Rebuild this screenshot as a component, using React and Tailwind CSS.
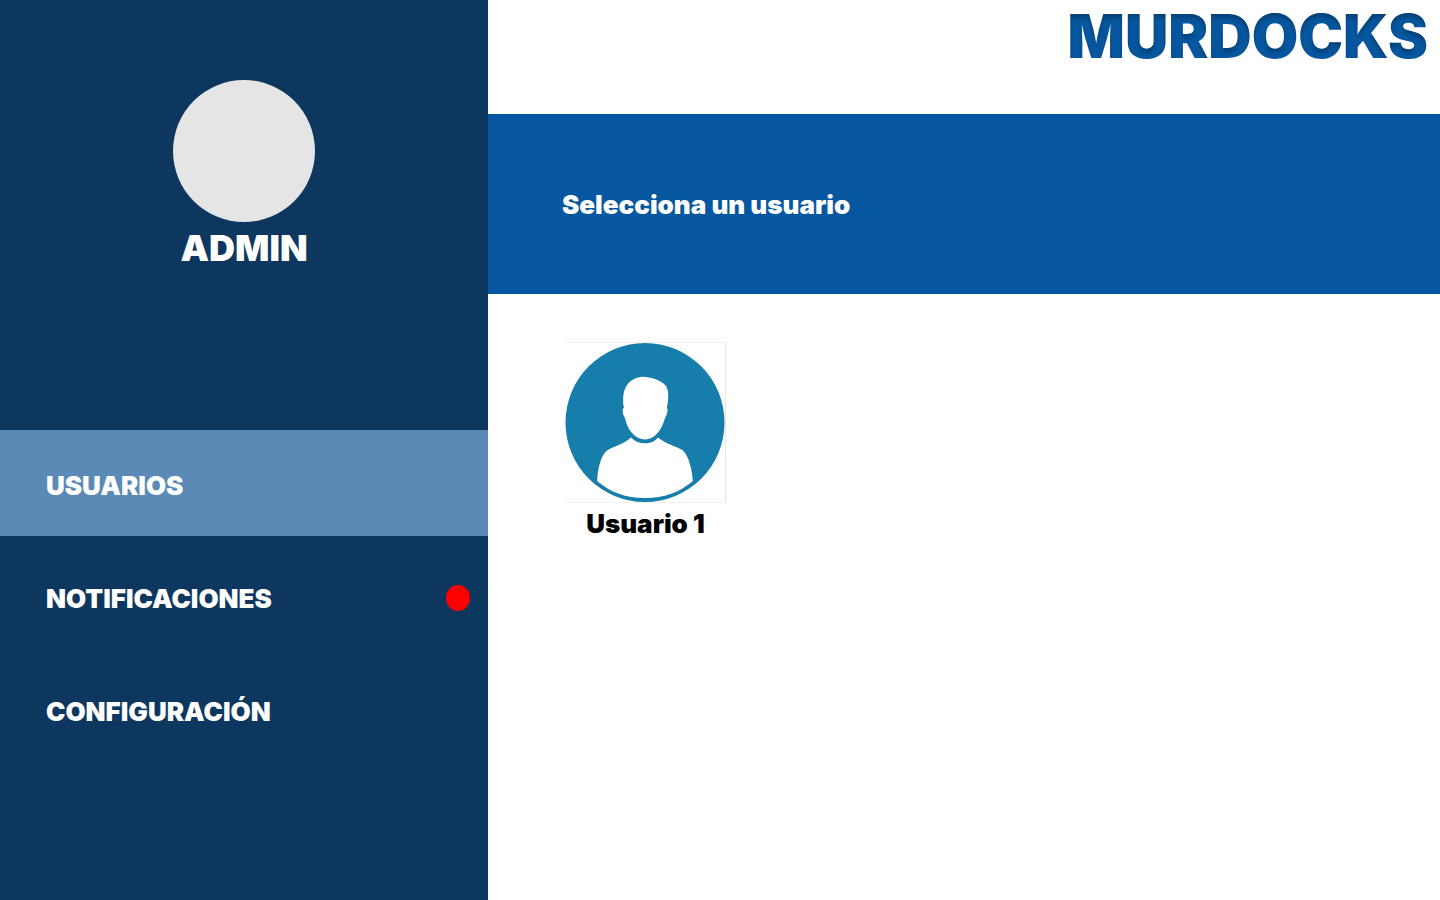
const navItems = [
  { label: "USUARIOS", href: "#usuarios", active: true, alert: false },
  { label: "NOTIFICACIONES", href: "#notificaciones", active: false, alert: true },
  { label: "CONFIGURACIÓN", href: "#configuracion", active: false, alert: false },
];

const users = [{ name: "Usuario 1" }];

function UserAvatar() {
  return (
    <svg viewBox="0 0 160 160" className="size-[161px] border-r border-y border-r-[#e6e6e6] border-y-[#f0f0f0]" aria-hidden="true">
      <circle cx="80" cy="80" r="80" fill="#177eac" />
      <path
        fill="#fff"
        d="M77 34C65 35 58 44 58 56C58 60 58 63 59 65C57 66 57 70 59 74L60 76C62 87 70 97 80 97C90 97 97 87 100 76L101 74C103 70 103 66 102 65C104 57 104 47 101 43C97 38 86 34 77 34Z"
      />
      <path
        fill="#fff"
        d="M66 95C60 101 48 104 42 108C35 113 32 130 32 139C45 150 61 156 80 156C99 156 115 150 128 139C128 130 124 113 118 108C112 104 100 101 93 95C87 103 73 103 66 95Z"
      />
    </svg>
  );
}

function InnerShadowFilter() {
  return (
    <svg width="0" height="0" className="absolute" aria-hidden="true">
      <filter id="inner-shadow" colorInterpolationFilters="sRGB">
        <feOffset in="SourceAlpha" dy="4" result="moved" />
        <feGaussianBlur in="moved" stdDeviation="2" result="soft" />
        <feComposite in="SourceAlpha" in2="soft" operator="out" result="edge" />
        <feFlood floodColor="#000" floodOpacity="0.25" />
        <feComposite in2="edge" operator="in" result="shade" />
        <feMerge>
          <feMergeNode in="SourceGraphic" />
          <feMergeNode in="shade" />
        </feMerge>
      </filter>
    </svg>
  );
}

function Sidebar() {
  return (
    <aside className="flex w-[488px] shrink-0 flex-col bg-[#0e375f] text-white">
      <div className="flex h-[430px] flex-col items-center pt-20">
        <div className="size-[142px] rounded-full bg-[#e5e5e5]" />
        <h2 className="mt-1 text-4xl leading-11 font-black">ADMIN</h2>
      </div>
      <nav className="flex flex-col gap-[7px]">
        {navItems.map((item) => (
          <a
            key={item.label}
            href={item.href}
            aria-current={item.active ? "page" : undefined}
            className={`flex h-[106px] items-center justify-between pr-[18px] pl-[46px] pt-1 text-[26px] font-black ${
              item.active ? "bg-[#5a8ab5]" : ""
            }`}
          >
            {item.label}
            {item.alert && <span className="h-[26px] w-6 rounded-[50%] bg-[#ff0000]" />}
          </a>
        ))}
      </nav>
    </aside>
  );
}

export default function App() {
  return (
    <div className="flex min-h-screen bg-white font-['Inter',sans-serif]">
      <InnerShadowFilter />
      <Sidebar />
      <div className="flex min-w-0 flex-1 flex-col">
        <header className="flex h-[114px] justify-end pr-3">
          <h1 className="text-[60px] leading-18 font-black text-[#0757a0] [filter:url(#inner-shadow)]">MURDOCKS</h1>
        </header>
        <div className="flex h-[180px] items-center bg-[#0757a0] px-[74px]">
          <p className="text-[26px] font-black text-white">Selecciona un usuario</p>
        </div>
        <main className="flex flex-wrap gap-12 px-[77px] pt-12">
          {users.map((user) => (
            <button key={user.name} type="button" className="flex flex-col items-center">
              <UserAvatar />
              <span className="mt-1 text-[26px] leading-[34px] font-black text-black">{user.name}</span>
            </button>
          ))}
        </main>
      </div>
    </div>
  );
}
